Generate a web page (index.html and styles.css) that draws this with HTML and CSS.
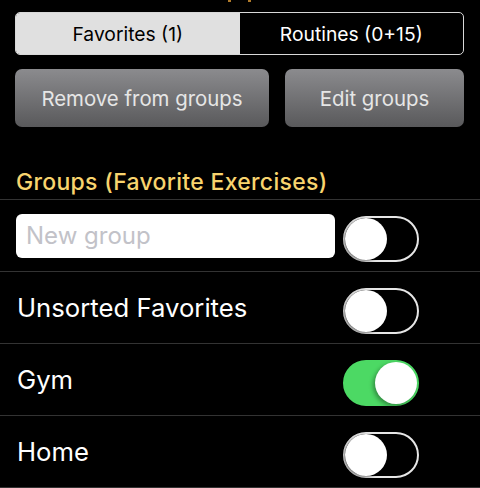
FILE: index.html
```html
<!DOCTYPE html>
<html lang="en">
<head>
    <meta charset="UTF-8">
    <meta name="viewport" content="width=device-width, initial-scale=1.0">
    <title>Groups</title>
    <link rel="stylesheet" href="styles.css">
</head>
<body>
  <div class="peek"><span></span><span></span></div>

  <div class="segmented">
    <div class="seg active">Favorites (1)</div>
    <div class="seg">Routines (0+15)</div>
  </div>

  <div class="actions">
    <button class="btn">Remove from groups</button>
    <button class="btn">Edit groups</button>
  </div>

  <h2 class="section-title">Groups (Favorite Exercises)</h2>

  <ul class="groups">
    <li class="row">
      <input class="new-group" type="text" placeholder="New group">
      <span class="toggle"></span>
    </li>
    <li class="row">
      <span class="label">Unsorted Favorites</span>
      <span class="toggle"></span>
    </li>
    <li class="row">
      <span class="label">Gym</span>
      <span class="toggle on"></span>
    </li>
    <li class="row">
      <span class="label">Home</span>
      <span class="toggle"></span>
    </li>
  </ul>
</body>
</html>
```

FILE: styles.css
```css
body {
    margin: 0;
    background: #000;
    color: #fff;
    font-family: Inter, "Noto Sans", sans-serif;
}

.peek {
    display: flex;
    gap: 17px;
    padding-left: 228px;
    height: 12px;
}
.peek span {
    width: 3px;
    height: 2px;
    background: #b07a2a;
}

.segmented {
    display: flex;
    margin: 0 16px 0 15px;
    height: 43px;
    border: 1px solid #d8d8d8;
    border-radius: 5px;
    overflow: hidden;
    box-sizing: border-box;
}
.seg {
    flex: 1;
    display: flex;
    align-items: center;
    justify-content: center;
    font-size: 19.3px;
    color: #fff;
}
.seg.active {
    background: #e0e0e0;
    color: #000;
}

.actions {
    display: grid;
    grid-template-columns: 254px 1fr;
    gap: 16px;
    margin: 14px 16px 0 15px;
}
.btn {
    height: 58px;
    border: none;
    border-radius: 7px;
    background: linear-gradient(to bottom, #8b8b8e, #59595b);
    color: #e6e6e6;
    font-family: inherit;
    font-size: 20.4px;
}

.section-title {
    margin: 0;
    padding: 44px 16px 6px;
    font-size: 23px;
    font-weight: 500;
    letter-spacing: 0.3px;
    color: #f8d46e;
    line-height: 22px;
}

.groups {
    list-style: none;
    margin: 0;
    padding: 0;
    border-top: 1px solid #333;
}
.row {
    display: flex;
    align-items: center;
    height: 71px;
    padding-left: 17px;
    border-bottom: 1px solid #333;
}
.label {
    flex: 1;
    font-size: 25.7px;
}
.new-group {
    width: 319px;
    height: 44px;
    margin-left: -1px;
    margin-right: 8px;
    box-sizing: border-box;
    border: none;
    border-radius: 6px;
    padding: 0 10px;
    font-family: inherit;
    font-size: 24px;
}
.new-group::placeholder {
    color: #c2c2c8;
}

.toggle {
    position: relative;
    width: 76px;
    height: 46px;
    margin: 7px 61px 0 auto;
    border: 2px solid #e6e6e6;
    border-radius: 23px;
    box-sizing: border-box;
}
.toggle::after {
    content: "";
    position: absolute;
    top: 0;
    left: 0;
    width: 42px;
    height: 42px;
    border-radius: 50%;
    background: #fff;
    box-shadow: -1px 1px 3px rgba(0, 0, 0, 0.5);
}
.toggle.on {
    background: #4cd964;
    border-color: #4cd964;
}
.toggle.on::after {
    left: auto;
    right: 0;
    box-shadow: -2px 2px 4px rgba(0, 0, 0, 0.35);
}
```
